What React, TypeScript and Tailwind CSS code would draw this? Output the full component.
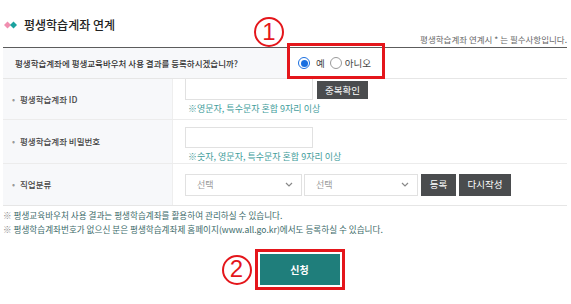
const font = { fontFamily: '"Noto Sans CJK KR", "Noto Sans", sans-serif' }

function Diamonds() {
  return (
    <svg width="14" height="8" viewBox="0 0 14 8" aria-hidden="true">
      <path d="M3.5 0.5 L7 4 L3.5 7.5 L0 4 Z" fill="#f08fb0" />
      <path d="M9.5 0.5 L13 4 L9.5 7.5 L6 4 Z" fill="#1aa39f" />
    </svg>
  )
}

function Circled({ n }: { n: string }) {
  return (
    <span
      className="flex h-[30px] w-[30px] items-center justify-center rounded-full border-2 border-[#e4161b] pb-[1px] text-[24px] leading-none text-[#e4161b]"
      style={{ fontFamily: '"Liberation Sans", sans-serif' }}
    >
      {n}
    </span>
  )
}

function Radio({ checked }: { checked?: boolean }) {
  return (
    <span
      className={`flex h-[12px] w-[12px] items-center justify-center rounded-full border ${
        checked ? 'border-[#1a6fe0]' : 'border-[#9a9a9a]'
      } bg-white`}
    >
      {checked && <span className="h-[7px] w-[7px] rounded-full bg-[#1a6fe0]" />}
    </span>
  )
}

function Chevron() {
  return (
    <svg width="8" height="5" viewBox="0 0 8 5" fill="none" stroke="#888" strokeWidth="1.2" aria-hidden="true">
      <path d="M1 1l3 3 3-3" />
    </svg>
  )
}

function Select({ w }: { w: string }) {
  return (
    <div className={`flex h-[22px] ${w} items-center justify-between border border-[#e1e1e1] bg-white pl-[11px] pr-[8px] text-[9px] text-[#999]`}>
      <span>선택</span>
      <Chevron />
    </div>
  )
}

function DarkBtn({ children, w }: { children: string; w: string }) {
  return (
    <span className={`flex h-[22px] ${w} items-center justify-center bg-[#4a4c4e] text-[9.5px] text-white`}>
      {children}
    </span>
  )
}

function Label({ children }: { children: string }) {
  return (
    <div className="flex w-[170px] items-center border-r border-[#eeeeee] bg-[#f7f8fa] pl-[9px] text-[8.5px] font-medium text-[#444]">
      <span className="mr-[5px] text-[#999]">•</span>
      {children}
    </div>
  )
}

export default function App() {
  return (
    <div className="h-[304px] w-[571px] bg-white text-[#333]" style={font}>
      <div className="relative ml-[3px] w-[564px]">
        {/* 헤더 */}
        <div className="flex h-[48px] items-end justify-between border-b border-[#5c5c5c] pb-[4px]">
          <div className="mb-[12px] flex items-center gap-[6px] pl-[1px]">
            <Diamonds />
            <span className="text-[12px] font-medium leading-none text-[#222]">평생학습계좌 연계</span>
          </div>
          <span className="text-[8.5px] leading-none text-[#666]">평생학습계좌 연계시 * 는 필수사항입니다.</span>
        </div>

        {/* 등록 여부 */}
        <div className="flex h-[31px] border-b border-[#e6e6e6]">
          <div className="flex w-[284px] items-center bg-[#f7f8fa] pl-[12px] text-[8.5px] font-medium text-[#333]">
            평생학습계좌에 평생교육바우처 사용 결과를 등록하시겠습니까?
          </div>
          <div className="flex items-center pl-[11px] text-[9.5px] text-[#444]">
            <Radio checked />
            <span className="ml-[6px] mr-[5px]">예</span>
            <Radio />
            <span className="ml-[3px]">아니오</span>
          </div>
        </div>

        {/* ID */}
        <div className="flex h-[41px] border-b border-[#ececec]">
          <Label>평생학습계좌 ID</Label>
          <div className="flex flex-col pl-[12px]">
            <div className="flex items-start gap-[4px]">
              <div className="h-[21px] w-[128px] border border-t-0 border-[#e1e1e1]" />
              <span className="mt-[2px] flex h-[18px] w-[51px] items-center justify-center bg-[#4a4c4e] text-[9.5px] text-white">
                중복확인
              </span>
            </div>
            <span className="mt-[2px] pl-[3px] text-[9px] text-[#3f9d9b]">※영문자, 특수문자 혼합 9자리 이상</span>
          </div>
        </div>

        {/* 비밀번호 */}
        <div className="flex h-[44px] border-b border-[#ececec]">
          <Label>평생학습계좌 비밀번호</Label>
          <div className="flex flex-col pl-[12px] pt-[7px]">
            <div className="h-[21px] w-[128px] border border-[#e1e1e1]" />
            <span className="mt-[2px] pl-[3px] text-[9px] text-[#3f9d9b]">※숫자, 영문자, 특수문자 혼합 9자리 이상</span>
          </div>
        </div>

        {/* 직업분류 */}
        <div className="flex h-[42px] border-b border-[#e6e6e6]">
          <Label>직업분류</Label>
          <div className="flex items-center pl-[12px]">
            <Select w="w-[117px]" />
            <div className="ml-[2px]">
              <Select w="w-[114px]" />
            </div>
            <div className="ml-[3px] flex gap-[3px]">
              <DarkBtn w="w-[35px]">등록</DarkBtn>
              <DarkBtn w="w-[52px]">다시작성</DarkBtn>
            </div>
          </div>
        </div>

        {/* 안내 */}
        <div className="mt-[3px] flex flex-col gap-[2px] text-[8.6px] leading-[12px] text-[#3d6b6a]">
          <p>
            <span className="text-[#888]">※ </span>평생교육바우처 사용 결과는 평생학습계좌를 활용하여 관리하실 수 있습니다.
          </p>
          <p>
            <span className="text-[#888]">※ </span>평생학습계좌번호가 없으신 분은 평생학습계좌제 홈페이지(www.all.go.kr)에서도 등록하실 수 있습니다.
          </p>
        </div>

        {/* 신청 */}
        <div className="mt-[14px] flex items-center justify-center pr-[4px]">
          <div className="mr-[3px]">
            <Circled n="2" />
          </div>
          <div className="border-[3px] border-[#e4161b] p-[2px]">
            <span className="flex h-[31px] w-[80px] items-center justify-center bg-[#1f7e7b] text-[10px] font-bold text-white">
              신청
            </span>
          </div>
        </div>

        {/* 표시 ① */}
        <div className="absolute left-[251px] top-[17px]">
          <Circled n="1" />
        </div>
        <div className="pointer-events-none absolute left-[284px] top-[43px] h-[36px] w-[98px] border-[3px] border-[#e4161b]" />
      </div>
    </div>
  )
}
